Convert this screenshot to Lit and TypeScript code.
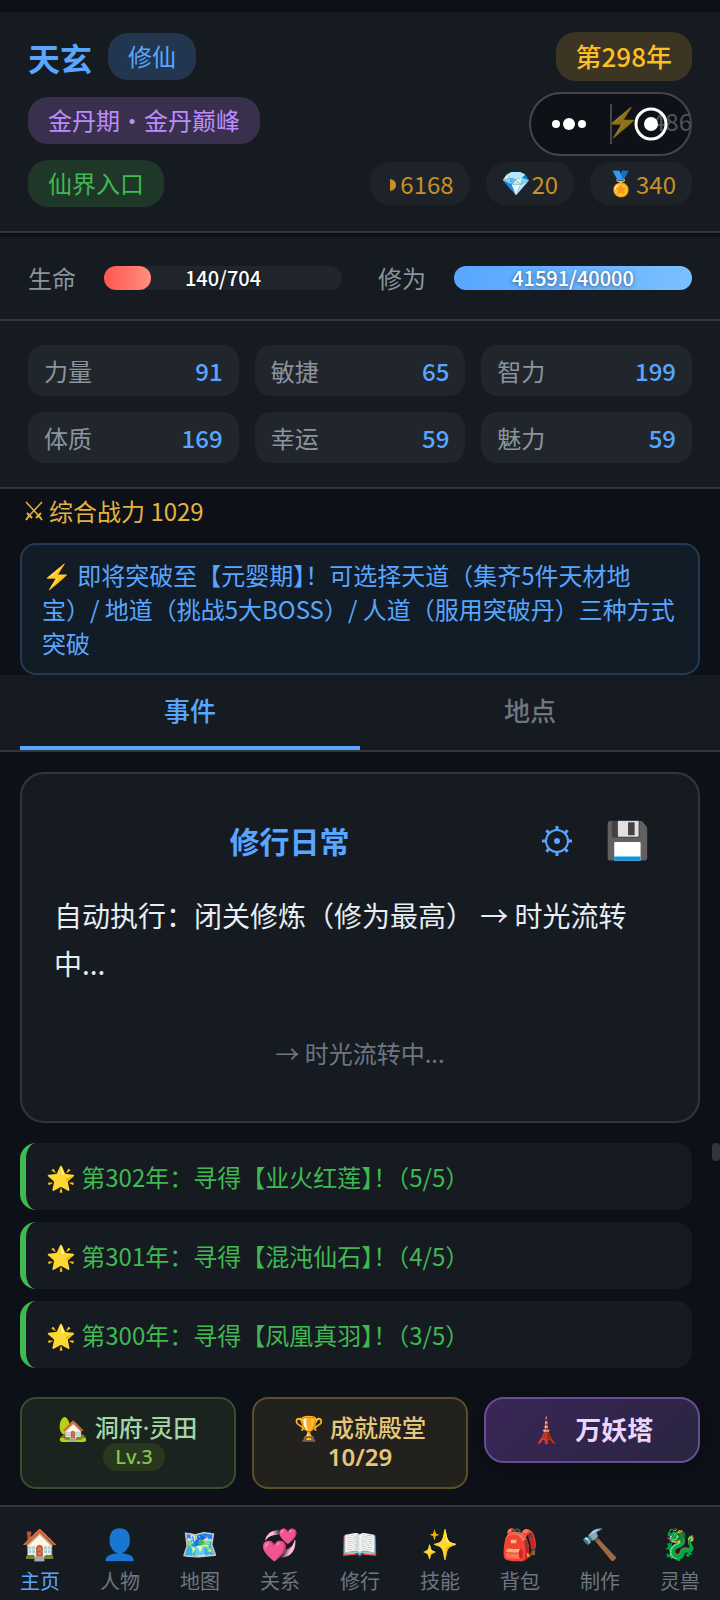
import { css, html, LitElement, svg } from "lit";
import { customElement, property } from "lit/decorators.js";
import { classMap } from "lit/directives/class-map.js";

interface Stat {
  label: string;
  value: number;
}

interface NavItem {
  icon: string;
  label: string;
}

const STATS: Stat[] = [
  { label: "力量", value: 91 },
  { label: "敏捷", value: 65 },
  { label: "智力", value: 199 },
  { label: "体质", value: 169 },
  { label: "幸运", value: 59 },
  { label: "魅力", value: 59 },
];

const NOTICE =
  "即将突破至【元婴期】！可选择天道（集齐5件天材地宝）/ 地道（挑战5大BOSS）/ 人道（服用突破丹）三种方式突破";

const LOGS = [
  "第302年：寻得【业火红莲】！（5/5）",
  "第301年：寻得【混沌仙石】！（4/5）",
  "第300年：寻得【凤凰真羽】！（3/5）",
];

const NAV: NavItem[] = [
  { icon: "🏠", label: "主页" },
  { icon: "👤", label: "人物" },
  { icon: "🗺️", label: "地图" },
  { icon: "💞", label: "关系" },
  { icon: "📖", label: "修行" },
  { icon: "✨", label: "技能" },
  { icon: "🎒", label: "背包" },
  { icon: "🔨", label: "制作" },
  { icon: "🐉", label: "灵兽" },
];

@customElement("stat-bar")
export class StatBar extends LitElement {
  @property() label = "";
  @property() kind = "hp";
  @property({ type: Number }) value = 0;
  @property({ type: Number }) max = 1;

  render() {
    const percent = Math.min(100, (this.value / this.max) * 100);
    return html`
      <span class="label">${this.label}</span>
      <div class="track">
        <div class="fill ${this.kind}" style="width: ${percent}%"></div>
        <span class="value">${this.value}/${this.max}</span>
      </div>
    `;
  }

  static styles = css`
    :host {
      display: flex;
      flex: 1;
      align-items: center;
      gap: 28px;
    }

    .label {
      color: #8b949e;
      font-size: 24px;
      line-height: 34px;
    }

    .track {
      flex: 1;
      display: grid;
      height: 24px;
      border-radius: 12px;
      background-color: #21262d;
    }

    .fill,
    .value {
      grid-area: 1 / 1;
    }

    .fill {
      border-radius: 12px;
    }

    .hp {
      background: linear-gradient(90deg, #ff5550, #ff8f80);
    }

    .exp {
      background: linear-gradient(90deg, #58a6ff, #79c0ff);
    }

    .value {
      color: #fff;
      font-size: 20px;
      font-weight: 500;
      line-height: 24px;
      text-align: center;
      text-shadow: 0 1px 4px rgba(0, 0, 0, 0.5);
    }
  `;
}

@customElement("app-root")
export class AppRoot extends LitElement {
  @property({ attribute: false }) tab = "事件";
  @property({ attribute: false }) page = "主页";

  private renderHeader() {
    return html`
      <header class="header">
        <div class="row">
          <div class="group">
            <h1 class="name">天玄</h1>
            <span class="pill blue">修仙</span>
          </div>
          <span class="pill year">第298年</span>
        </div>
        <div class="row">
          <span class="pill purple">金丹期・金丹巅峰</span>
          <span class="energy"><span class="emoji">⚡</span>486</span>
        </div>
        <div class="row">
          <span class="pill green">仙界入口</span>
          <div class="group">
            <span class="coin">
              <svg class="half" viewBox="0 0 14 14">
                <path d="M4 2q6 1 6 6t-6 6z" fill="currentColor" />
              </svg>6168</span>
            <span class="coin"><span class="emoji">💎</span>20</span>
            <span class="coin"><span class="emoji">🏅</span>340</span>
          </div>
        </div>
        <div class="capsule">
          <button class="capsule-btn" aria-label="更多">
            <svg width="36" height="14" viewBox="0 0 36 14" fill="#fff">
              <circle cx="4" cy="7" r="4" />
              <circle cx="17" cy="7" r="6" />
              <circle cx="30" cy="7" r="4" />
            </svg>
          </button>
          <button class="capsule-btn close" aria-label="关闭">
            <svg width="34" height="34" viewBox="0 0 34 34">
              <circle cx="17" cy="17" r="15" fill="none" stroke="#fff" stroke-width="3" />
              <circle cx="17" cy="17" r="7" fill="#fff" />
            </svg>
          </button>
        </div>
      </header>
    `;
  }

  private renderTab(label: string) {
    return html`
      <button
        role="tab"
        aria-selected=${this.tab === label}
        class=${classMap({ tab: true, active: this.tab === label })}
        @click=${() => (this.tab = label)}
      >
        ${label}
      </button>
    `;
  }

  // brackets that touch "！" take their half-width form
  private renderText(text: string) {
    return text
      .split(/(】(?=！)|(?<=！)（)/)
      .map((part) =>
        part === "】" || part === "（"
          ? html`<span class="half-width">${part}</span>`
          : part
      );
  }

  private renderGear() {
    const teeth = [0, 45, 90, 135, 180, 225, 270, 315];
    return html`
      <svg width="32" height="32" viewBox="0 0 32 32" fill="none" stroke="currentColor">
        <circle cx="16" cy="16" r="11" stroke-width="2" />
        <circle cx="16" cy="16" r="3" fill="currentColor" stroke="none" />
        ${teeth.map(
          (angle) => svg`
            <path
              d="M16 1v4"
              stroke-width="3"
              transform="rotate(${angle} 16 16)"
            />
          `
        )}
      </svg>
    `;
  }

  private renderNavItem(item: NavItem) {
    return html`
      <button
        class=${classMap({ "nav-item": true, current: this.page === item.label })}
        @click=${() => (this.page = item.label)}
      >
        <span class="nav-icon">${item.icon}</span>
        <span>${item.label}</span>
      </button>
    `;
  }

  render() {
    return html`
      ${this.renderHeader()}
      <section class="bars">
        <stat-bar label="生命" kind="hp" .value=${140} .max=${704}></stat-bar>
        <stat-bar label="修为" kind="exp" .value=${41591} .max=${40000}></stat-bar>
      </section>
      <section class="stats">
        ${STATS.map(
          (stat) => html`
            <div class="stat">
              <span>${stat.label}</span>
              <span class="stat-value">${stat.value}</span>
            </div>
          `
        )}
      </section>
      <div class="power">
        <svg width="20" height="20" viewBox="0 0 20 20" fill="none" stroke="currentColor">
          <path d="M2 1l14 15M18 1L4 16" stroke-width="1.5" />
          <path d="M3 12l5 5M17 12l-5 5M5 15l-3 4M15 15l3 4" stroke-width="2" />
        </svg>
        <span>综合战力 1029</span>
      </div>
      <p class="notice">
        <span class="emoji">⚡</span> ${this.renderText(NOTICE)}
      </p>
      <div class="tabs" role="tablist">
        ${this.renderTab("事件")} ${this.renderTab("地点")}
      </div>
      <main class="main">
        <article class="card">
          <div class="card-head">
            <h2 class="card-title">修行日常</h2>
            <button class="tool" aria-label="设置">${this.renderGear()}</button>
            <button class="tool emoji" aria-label="保存">💾</button>
          </div>
          <p class="card-text">自动执行：闭关修炼（修为最高） → 时光流转中...</p>
          <p class="card-hint">→ 时光流转中...</p>
        </article>
        <div class="logs">
          ${LOGS.map(
            (log) => html`
              <div class="log">
                <span class="emoji">🌟</span> ${this.renderText(log)}
              </div>
            `
          )}
          <div class="thumb"></div>
        </div>
        <div class="actions">
          <button class="action cave">
            <span><span class="emoji">🏡</span> 洞府·灵田</span>
            <span class="level">Lv.3</span>
          </button>
          <button class="action hall">
            <span><span class="emoji">🏆</span> 成就殿堂</span>
            <span class="count">10/29</span>
          </button>
          <button class="action tower">
            <span class="emoji">🗼</span><span>万妖塔</span>
          </button>
        </div>
      </main>
      <nav class="nav">${NAV.map((item) => this.renderNavItem(item))}</nav>
    `;
  }

  static styles = css`
    :host {
      display: flex;
      flex-direction: column;
      box-sizing: border-box;
      min-height: 100vh;
      padding-top: 12px;
      background-color: #0d1117;
      color: #e6edf3;
      font-family: "Noto Sans CJK SC", "Noto Color Emoji", sans-serif;
      font-size: 24px;
    }

    * {
      box-sizing: border-box;
    }

    h1,
    h2,
    p {
      margin: 0;
    }

    button {
      padding: 0;
      border: none;
      background: none;
      color: inherit;
      font: inherit;
      cursor: pointer;
    }

    svg {
      display: block;
    }

    .emoji,
    .nav-icon {
      font-family: "Noto Color Emoji", "Noto Sans CJK SC", sans-serif;
      line-height: 1;
    }

    .half-width {
      font-feature-settings: "halt";
    }

    .header {
      position: relative;
      display: flex;
      flex-direction: column;
      gap: 16px;
      padding: 20px 28px 24px;
      border-bottom: 2px solid #30363d;
      background-color: #161b22;
    }

    .row,
    .group {
      display: flex;
      align-items: center;
      gap: 16px;
    }

    .row {
      justify-content: space-between;
    }

    .name {
      color: #58a6ff;
      font-size: 32px;
      line-height: 48px;
    }

    .pill {
      padding: 0 20px 2px;
      border-radius: 20px;
      line-height: 45px;
    }

    .blue {
      background-color: #23364f;
      color: #58a6ff;
    }

    .year {
      background-color: #3d3523;
      color: #fbbf24;
      font-size: 26px;
      font-weight: 500;
      line-height: 47px;
    }

    .purple {
      background-color: #38304d;
      color: #bc8cff;
    }

    .green {
      background-color: #1e3729;
      color: #3fb950;
    }

    .energy {
      display: flex;
      align-items: center;
      gap: 12px;
      color: #8b949e;
      line-height: 47px;
    }

    .energy .emoji {
      padding-top: 4px;
      font-size: 28px;
    }

    .coin {
      display: flex;
      align-items: center;
      padding: 0 16px;
      border-radius: 20px;
      background-color: #1e232a;
      color: #c69026;
      line-height: 43px;
    }

    .half {
      width: 14px;
      height: 14px;
    }

    .capsule {
      position: absolute;
      top: 80px;
      right: 28px;
      display: flex;
      width: 163px;
      height: 64px;
      padding: 10px 0;
      border: 2px solid #43464b;
      border-radius: 32px;
      background-color: rgba(4, 6, 10, 0.45);
    }

    .capsule-btn {
      flex: 1;
      display: flex;
      align-items: center;
      justify-content: center;
    }

    .close {
      border-left: 2px solid #43464b;
    }

    .bars {
      display: flex;
      gap: 36px;
      margin-top: 4px;
      padding: 24px 28px;
      border-bottom: 2px solid #30363d;
      background-color: #161b22;
    }

    .stats {
      display: grid;
      grid-template-columns: repeat(3, 1fr);
      gap: 16px;
      padding: 24px 28px;
      border-bottom: 2px solid #30363d;
      background-color: #161b22;
    }

    .stat {
      display: flex;
      justify-content: space-between;
      padding: 0 16px;
      border-radius: 16px;
      background-color: #21262d;
      color: #8b949e;
      line-height: 51px;
    }

    .stat-value {
      color: #58a6ff;
      font-weight: 500;
    }

    .power {
      display: flex;
      align-items: center;
      gap: 5px;
      margin-bottom: 10px;
      padding: 0 24px;
      color: #e3b341;
      line-height: 44px;
    }

    .notice {
      margin: 0 20px;
      padding: 13px 20px;
      border: 2px solid #233a54;
      border-radius: 16px;
      background-color: #121c27;
      color: #58a6ff;
      line-height: 34px;
    }

    .tabs {
      display: flex;
      padding: 0 20px;
      border-bottom: 2px solid #30363d;
      background-color: #161b22;
    }

    .tab {
      flex: 1;
      padding-bottom: 2px;
      border-bottom: 4px solid transparent;
      color: #6e7681;
      font-size: 26px;
      font-weight: 500;
      line-height: 69px;
    }

    .active {
      border-color: #58a6ff;
      color: #58a6ff;
    }

    .main {
      flex: 1;
      display: flex;
      flex-direction: column;
      padding: 20px 20px 16px;
    }

    .card {
      display: flex;
      flex-direction: column;
      padding: 32px;
      border: 2px solid #30363d;
      border-radius: 24px;
      background-color: #161b22;
    }

    .card-head {
      display: flex;
      align-items: center;
      line-height: 69px;
    }

    .card-title {
      flex: 1;
      color: #58a6ff;
      font-size: 30px;
      font-weight: 700;
      text-align: center;
    }

    .tool {
      padding: 0 16px;
      color: #58a6ff;
      font-size: 36px;
    }

    .card-text {
      padding: 16px 0 32px;
      font-size: 28px;
      line-height: 48px;
    }

    .card-hint {
      padding: 10px 0 12px;
      color: #6e7681;
      line-height: 48px;
      text-align: center;
    }

    .logs {
      position: relative;
      display: flex;
      flex-direction: column;
      gap: 12px;
      margin-top: 20px;
      padding-right: 8px;
    }

    .log {
      padding: 0 20px;
      border-left: 6px solid #3fb950;
      border-radius: 16px;
      background-color: #161b22;
      color: #3fb950;
      line-height: 67px;
    }

    .thumb {
      position: absolute;
      top: 0;
      right: -20px;
      width: 8px;
      height: 18px;
      border-radius: 4px;
      background-color: #30363d;
    }

    .actions {
      display: flex;
      align-items: flex-start;
      gap: 16px;
      margin-top: 29px;
    }

    .action {
      flex: 1;
      display: flex;
      flex-direction: column;
      align-items: center;
      padding: 14px 0 16px;
      border: 2px solid;
      border-radius: 16px;
      font-family: "Noto Sans", "Noto Sans CJK SC", sans-serif;
      font-weight: 500;
      line-height: 30px;
    }

    .cave {
      border-color: #34502f;
      background-color: #1b231f;
      color: #a5d6a7;
    }

    .level {
      margin-left: 12px;
      padding: 0 12px;
      border-radius: 14px;
      background-color: #28381f;
      color: #8bc34a;
      font-size: 20px;
      line-height: 28px;
    }

    .hall {
      border-color: #5c4e29;
      background-color: #23211e;
      color: #e6c77a;
    }

    .count {
      font-weight: 600;
      line-height: 28px;
    }

    .tower {
      flex-direction: row;
      justify-content: center;
      gap: 12px;
      padding: 16px 0;
      border-color: #664d96;
      border-radius: 20px;
      background: linear-gradient(135deg, #3a2558, #2a2540);
      box-shadow: 0 4px 12px rgba(0, 0, 0, 0.4);
      color: #e9d5ff;
      font-size: 26px;
      font-weight: 700;
      line-height: 30px;
    }

    .nav {
      display: flex;
      padding: 16px 0 6px;
      border-top: 2px solid #30363d;
      background-color: #161b22;
    }

    .nav-item {
      flex: 1;
      display: flex;
      flex-direction: column;
      align-items: center;
      color: #6e7681;
      font-size: 20px;
      line-height: 28px;
    }

    .nav-icon {
      font-size: 30px;
      line-height: 44px;
    }

    .current {
      color: #58a6ff;
    }
  `;
}

declare global {
  interface HTMLElementTagNameMap {
    "stat-bar": StatBar;
    "app-root": AppRoot;
  }
}
